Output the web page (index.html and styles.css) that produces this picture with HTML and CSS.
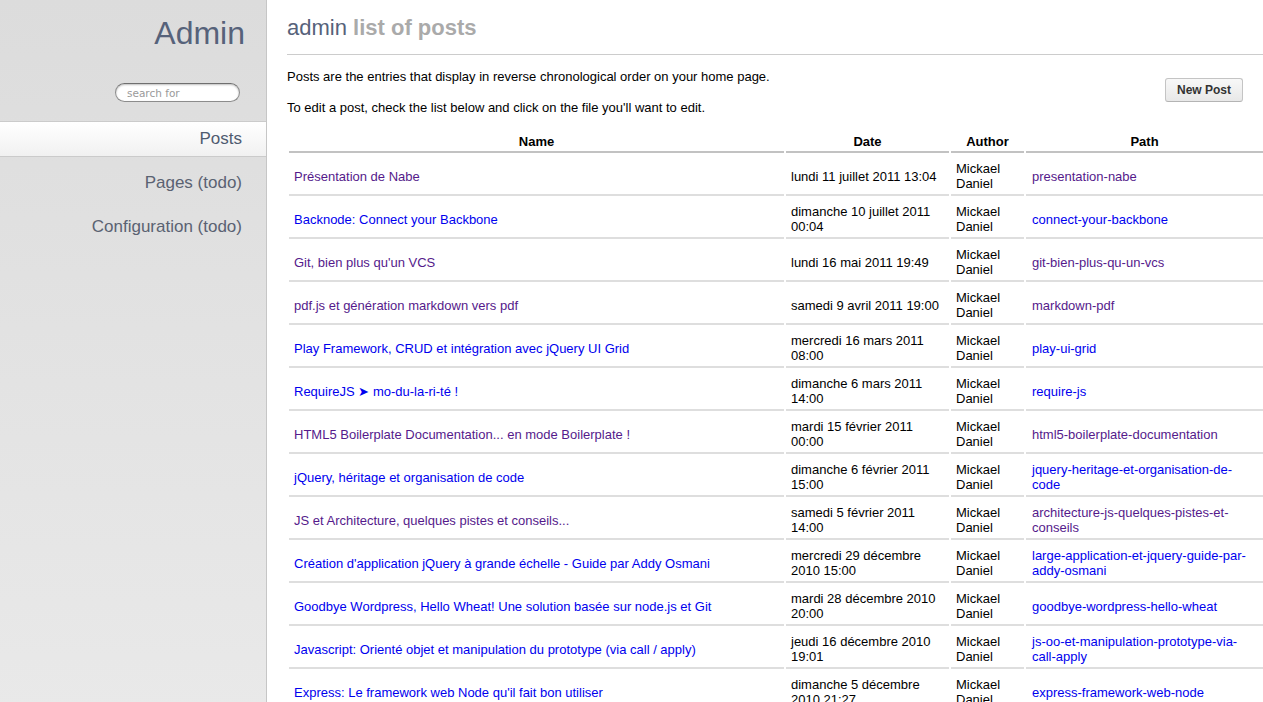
FILE: index.html
```html
<!DOCTYPE html>
<html lang="fr">
<head>
<meta charset="utf-8">
<title>Admin - list of posts</title>
<link rel="stylesheet" href="styles.css">
</head>
<body>
<div class="layout">
  <aside class="sidebar">
    <h1 class="brand">Admin</h1>
    <div class="search-row">
      <input class="search" type="search" placeholder="search for">
    </div>
    <nav class="nav">
      <a class="nav-item active" href="#">Posts</a>
      <a class="nav-item" href="#">Pages (todo)</a>
      <a class="nav-item" href="#">Configuration (todo)</a>
    </nav>
  </aside>
  <main class="main">
    <h1 class="page-title"><span class="t-admin">admin</span> <span class="t-sub">list of posts</span></h1>
    <hr class="rule">
    <div class="intro">
      <div class="intro-text">
        <p>Posts are the entries that display in reverse chronological order on your home page.</p>
        <p>To edit a post, check the list below and click on the file you'll want to edit.</p>
      </div>
      <button class="btn" type="button">New Post</button>
    </div>
    <table class="posts">
      <colgroup>
        <col class="c-name"><col class="c-date"><col class="c-author"><col class="c-path">
      </colgroup>
      <thead>
        <tr><th>Name</th><th>Date</th><th>Author</th><th>Path</th></tr>
      </thead>
      <tbody>
        <tr><td><a class="v" href="#">Présentation de Nabe</a></td><td>lundi 11 juillet 2011 13:04</td><td>Mickael Daniel</td><td><a class="v" href="#">presentation-nabe</a></td></tr>
        <tr><td><a href="#">Backnode: Connect your Backbone</a></td><td>dimanche 10 juillet 2011 00:04</td><td>Mickael Daniel</td><td><a href="#">connect-your-backbone</a></td></tr>
        <tr><td><a class="v" href="#">Git, bien plus qu'un VCS</a></td><td>lundi 16 mai 2011 19:49</td><td>Mickael Daniel</td><td><a class="v" href="#">git-bien-plus-qu-un-vcs</a></td></tr>
        <tr><td><a class="v" href="#">pdf.js et génération markdown vers pdf</a></td><td>samedi 9 avril 2011 19:00</td><td>Mickael Daniel</td><td><a class="v" href="#">markdown-pdf</a></td></tr>
        <tr><td><a href="#">Play Framework, CRUD et intégration avec jQuery UI Grid</a></td><td>mercredi 16 mars 2011 08:00</td><td>Mickael Daniel</td><td><a href="#">play-ui-grid</a></td></tr>
        <tr><td><a href="#">RequireJS ➤ mo-du-la-ri-té !</a></td><td>dimanche 6 mars 2011 14:00</td><td>Mickael Daniel</td><td><a href="#">require-js</a></td></tr>
        <tr><td><a class="v" href="#">HTML5 Boilerplate Documentation... en mode Boilerplate !</a></td><td>mardi 15 février 2011 00:00</td><td>Mickael Daniel</td><td><a class="v" href="#">html5-boilerplate-documentation</a></td></tr>
        <tr><td><a href="#">jQuery, héritage et organisation de code</a></td><td>dimanche 6 février 2011 15:00</td><td>Mickael Daniel</td><td><a href="#">jquery-heritage-et-organisation-de-code</a></td></tr>
        <tr><td><a class="v" href="#">JS et Architecture, quelques pistes et conseils...</a></td><td>samedi 5 février 2011 14:00</td><td>Mickael Daniel</td><td><a class="v" href="#">architecture-js-quelques-pistes-et-conseils</a></td></tr>
        <tr><td><a href="#">Création d'application jQuery à grande échelle - Guide par Addy Osmani</a></td><td>mercredi 29 décembre 2010 15:00</td><td>Mickael Daniel</td><td><a href="#">large-application-et-jquery-guide-par-addy-osmani</a></td></tr>
        <tr><td><a href="#">Goodbye Wordpress, Hello Wheat! Une solution basée sur node.js et Git</a></td><td>mardi 28 décembre 2010 20:00</td><td>Mickael Daniel</td><td><a href="#">goodbye-wordpress-hello-wheat</a></td></tr>
        <tr><td><a href="#">Javascript: Orienté objet et manipulation du prototype (via call / apply)</a></td><td>jeudi 16 décembre 2010 19:01</td><td>Mickael Daniel</td><td><a href="#">js-oo-et-manipulation-prototype-via-call-apply</a></td></tr>
        <tr><td><a href="#">Express: Le framework web Node qu'il fait bon utiliser</a></td><td>dimanche 5 décembre 2010 21:27</td><td>Mickael Daniel</td><td><a href="#">express-framework-web-node</a></td></tr>
      </tbody>
    </table>
  </main>
</div>
</body>
</html>
```

FILE: styles.css
```css
html {
  overflow: hidden;
}

body {
  margin: 0;
  font-family: "Liberation Sans", Arial, sans-serif;
  font-size: 13px;
  line-height: 15px;
  color: #000;
  background: #fff;
}

.layout {
  display: flex;
  min-height: 100vh;
}

/* Sidebar */
.sidebar {
  width: 266px;
  flex: 0 0 266px;
  background: linear-gradient(#dcdcdc, #e9e9e9);
  border-right: 1px solid #c6c6c6;
  padding-top: 14px;
}

.brand {
  margin: 0;
  padding-right: 21px;
  text-align: right;
  font-size: 32px;
  line-height: 38px;
  font-weight: normal;
  color: #56627a;
}

.search-row {
  display: flex;
  justify-content: flex-end;
  padding-right: 26px;
  margin-top: 31px;
}

.search {
  width: 125px;
  height: 19px;
  box-sizing: border-box;
  border: 1px solid #8c8c8c;
  border-top-color: #6f6f6f;
  border-radius: 10px;
  background: #fff;
  box-shadow: inset 0 1px 2px rgba(0, 0, 0, 0.25);
  padding: 0 11px;
  font-family: "DejaVu Sans", "Liberation Sans", sans-serif;
  font-size: 10.5px;
  color: #333;
  outline: none;
  -webkit-appearance: none;
  appearance: none;
}

.search::placeholder {
  color: #9a9a9a;
}

.nav {
  display: flex;
  flex-direction: column;
  gap: 8px;
  margin-top: 19px;
}

.nav-item {
  display: block;
  padding: 7px 24px 7px 0;
  text-align: right;
  font-size: 17px;
  line-height: 20px;
  color: #5a6272;
  text-decoration: none;
  border-top: 1px solid transparent;
  border-bottom: 1px solid transparent;
}

.nav-item.active {
  background: linear-gradient(#ffffff, #f1f1f1);
  border-top-color: #cbcbcb;
  border-bottom-color: #cbcbcb;
  color: #4f5b70;
}

/* Main */
.main {
  flex: 1;
  min-width: 0;
  padding: 15px 0 0 20px;
}

.page-title {
  margin: 0;
  font-size: 22px;
  line-height: 26px;
  font-weight: normal;
}

.t-admin {
  color: #56627a;
}

.t-sub {
  color: #aaaaaa;
  font-weight: bold;
}

.rule {
  margin: 13px 0 0;
  border: 0;
  border-top: 1px solid #cccccc;
  height: 0;
}

.intro {
  display: flex;
  justify-content: space-between;
  align-items: flex-start;
  margin-top: 14px;
}

.intro-text {
  display: flex;
  flex-direction: column;
  gap: 16px;
}

.intro-text p {
  margin: 0;
}

.btn {
  margin: 9px 20px 0 0;
  width: 78px;
  height: 24px;
  border: 1px solid #c4c4c4;
  border-bottom-color: #b4b4b4;
  border-radius: 3px;
  background: linear-gradient(#f8f8f8, #e8e8e8);
  font-family: "Liberation Sans", Arial, sans-serif;
  font-size: 12px;
  font-weight: bold;
  color: #333;
  padding: 0;
}

/* Table */
.posts {
  width: calc(100% + 2px);
  margin-top: 15px;
  border-collapse: separate;
  border-spacing: 2px 0;
  table-layout: fixed;
}

.c-name { width: 495px; }
.c-date { width: 163px; }
.c-author { width: 73px; }

.posts th {
  padding: 4px 5px 2px;
  font-weight: bold;
  text-align: center;
  border-bottom: 2px solid #c2c2c2;
}

.posts td {
  padding: 8px 5px 3px 5px;
  text-align: left;
  vertical-align: middle;
  border-bottom: 2px solid #dedede;
}

.posts td:last-child {
  padding-left: 6px;
}

.posts a {
  color: #0000ee;
  text-decoration: none;
}

.posts a.v {
  color: #551a8b;
}
```
